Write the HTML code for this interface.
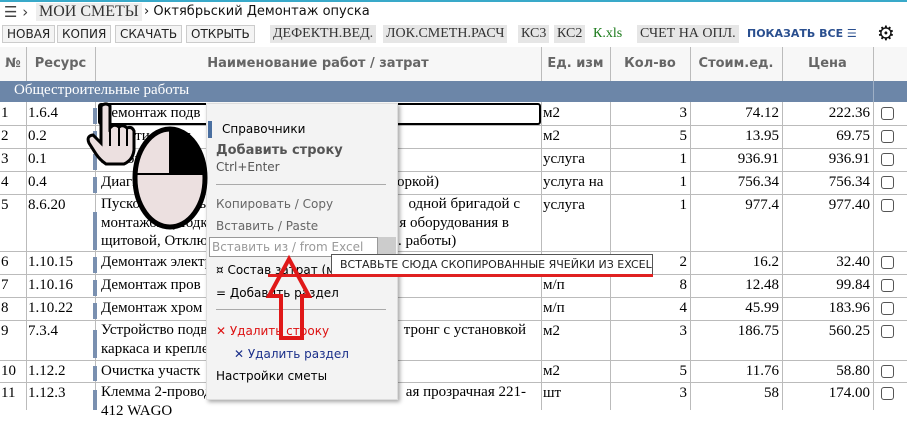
<!DOCTYPE html>
<html><head><meta charset="utf-8"><style>
*{margin:0;padding:0;box-sizing:border-box}
body{width:907px;height:410px;overflow:hidden;background:#fff;position:relative;font-family:"Liberation Serif",serif;font-size:15px;color:#000}
.a{position:absolute;white-space:nowrap}
.sans{font-family:"DejaVu Sans","Liberation Sans",sans-serif}
.btn{position:absolute;top:25px;height:18px;border:1px solid #ccc;background:#f4f4f4;font-family:"DejaVu Sans",sans-serif;font-size:12px;line-height:16px;padding:0 4px;color:#222}
.sb{position:absolute;top:25px;height:18px;background:#e6e6e6;font-size:14px;line-height:18px;padding:0 3px;color:#333}
.hl{position:absolute;left:0;width:907px;height:1px;background:#bbb}
.vl{position:absolute;width:1px;background:#bbb}
.th{position:absolute;top:47px;height:34px;line-height:34px;font-family:"DejaVu Sans",sans-serif;font-weight:bold;font-size:13px;color:#666;text-align:center}
.c{position:absolute;line-height:20px;white-space:nowrap}
.r{text-align:right}
.rt{position:absolute;line-height:20px;white-space:nowrap;text-align:right}
.cb{position:absolute;left:881px;width:13px;height:13px;border:1px solid #555;border-radius:3px;background:#fff}
.bar{position:absolute;left:93px;width:4px;background:#7a90b0}
.mi{position:absolute;left:216px;font-family:"DejaVu Sans",sans-serif;font-size:12px;white-space:nowrap}
</style></head><body>
<div class="a" style="left:0;top:0;width:907px;height:2px;background:#39a9c9"></div>
<div class="a sans" style="left:4px;top:3px;font-size:15px;color:#444">☰ ›</div>
<div class="a" style="left:36px;top:3px;font-size:16px;background:#eee;padding:0 3px;color:#333">МОИ СМЕТЫ</div>
<div class="a sans" style="left:144px;top:4px;font-size:13px;color:#111">› Октябрьский Демонтаж опуска</div>
<div class="btn" style="left:2px">НОВАЯ</div>
<div class="btn" style="left:57px">КОПИЯ</div>
<div class="btn" style="left:115px">СКАЧАТЬ</div>
<div class="btn" style="left:186px">ОТКРЫТЬ</div>
<div class="sb" style="left:270px">ДЕФЕКТН.ВЕД.</div>
<div class="sb" style="left:383px">ЛОК.СМЕТН.РАСЧ</div>
<div class="sb" style="left:518px">КС3</div>
<div class="sb" style="left:554px">КС2</div>
<div class="a" style="left:593px;top:25px;line-height:18px;font-size:14px;color:#1a7a1a">К.xls</div>
<div class="sb" style="left:637px">СЧЕТ НА ОПЛ.</div>
<div class="a sans" style="left:747px;top:27px;font-size:11px;font-weight:bold;color:#2a4f8f">ПОКАЗАТЬ ВСЕ ☰</div>
<div class="a sans" style="left:877px;top:21px;font-size:20px;color:#111">⚙</div>
<div class="a" style="left:0;top:47px;width:907px;height:34px;background:#f7f7f7"></div>
<div class="th" style="left:0;width:26px">№</div>
<div class="th" style="left:26px;width:69px">Ресурс</div>
<div class="th" style="left:95px;width:446px">Наименование работ / затрат</div>
<div class="th" style="left:541px;width:69px">Ед. изм</div>
<div class="th" style="left:610px;width:80px">Кол-во</div>
<div class="th" style="left:690px;width:92px">Стоим.ед.</div>
<div class="th" style="left:782px;width:91px">Цена</div>
<div class="a" style="left:0;top:81px;width:907px;height:21px;background:#6c86a8"></div>
<div class="a" style="left:873px;top:81px;width:1px;height:21px;background:#9fb0c6"></div>
<div class="a" style="left:14px;top:82px;color:#fff;font-size:15px">Общестроительные работы</div>

<div class="vl" style="left:26px;top:47px;height:34px"></div><div class="vl" style="left:95px;top:47px;height:34px"></div><div class="vl" style="left:541px;top:47px;height:34px"></div><div class="vl" style="left:610px;top:47px;height:34px"></div><div class="vl" style="left:690px;top:47px;height:34px"></div><div class="vl" style="left:782px;top:47px;height:34px"></div><div class="vl" style="left:873px;top:47px;height:34px"></div>
<div class="vl" style="left:26px;top:102px;height:308px"></div><div class="vl" style="left:95px;top:102px;height:308px"></div><div class="vl" style="left:541px;top:102px;height:308px"></div><div class="vl" style="left:610px;top:102px;height:308px"></div><div class="vl" style="left:690px;top:102px;height:308px"></div><div class="vl" style="left:782px;top:102px;height:308px"></div><div class="vl" style="left:873px;top:102px;height:308px"></div>
<div class="hl" style="top:125px"></div><div class="hl" style="top:148px"></div><div class="hl" style="top:171px"></div><div class="hl" style="top:194px"></div><div class="hl" style="top:251px"></div><div class="hl" style="top:274px"></div><div class="hl" style="top:297px"></div><div class="hl" style="top:320px"></div><div class="hl" style="top:360px"></div><div class="hl" style="top:382px"></div>

<div class="bar" style="top:108px;height:16px"></div><div class="bar" style="top:131px;height:16px"></div><div class="bar" style="top:154px;height:16px"></div><div class="bar" style="top:177px;height:16px"></div><div class="bar" style="top:212px;height:38px"></div><div class="bar" style="top:257px;height:16px"></div><div class="bar" style="top:280px;height:16px"></div><div class="bar" style="top:303px;height:16px"></div><div class="bar" style="top:330px;height:28px"></div><div class="bar" style="top:366px;height:15px"></div><div class="bar" style="top:390px;height:20px"></div>

<div class="a" style="left:98px;top:103px;width:443px;height:22px;border:2px solid #000;border-radius:3px"></div>

<div class="c" style="left:1px;top:103px">1</div><div class="c" style="left:28px;top:103px">1.6.4</div><div class="c" style="left:101px;top:103px">Демонтаж подв</div><div class="c" style="left:543px;top:103px">м2</div><div class="c r" style="left:610px;width:77px;top:103px">3</div><div class="c r" style="left:690px;width:89px;top:103px">74.12</div><div class="c r" style="left:782px;width:88px;top:103px">222.36</div><div class="cb" style="top:107px"></div>
<div class="c" style="left:1px;top:126px">2</div><div class="c" style="left:28px;top:126px">0.2</div><div class="c" style="left:101px;top:126px">Укрытие ценн</div><div class="c" style="left:543px;top:126px">м2</div><div class="c r" style="left:610px;width:77px;top:126px">5</div><div class="c r" style="left:690px;width:89px;top:126px">13.95</div><div class="c r" style="left:782px;width:88px;top:126px">69.75</div><div class="cb" style="top:130px"></div>
<div class="c" style="left:1px;top:149px">3</div><div class="c" style="left:28px;top:149px">0.1</div><div class="c" style="left:101px;top:149px">Вызов</div><div class="c" style="left:543px;top:149px">услуга</div><div class="c r" style="left:610px;width:77px;top:149px">1</div><div class="c r" style="left:690px;width:89px;top:149px">936.91</div><div class="c r" style="left:782px;width:88px;top:149px">936.91</div><div class="cb" style="top:153px"></div>
<div class="c" style="left:1px;top:172px">4</div><div class="c" style="left:28px;top:172px">0.4</div><div class="c" style="left:101px;top:172px">Диагностика</div><div class="c" style="left:397px;top:172px">оркой)</div><div class="c" style="left:543px;top:172px">услуга на</div><div class="c r" style="left:610px;width:77px;top:172px">1</div><div class="c r" style="left:690px;width:89px;top:172px">756.34</div><div class="c r" style="left:782px;width:88px;top:172px">756.34</div><div class="cb" style="top:176px"></div>
<div class="c" style="left:1px;top:195px">5</div><div class="c" style="left:28px;top:195px">8.6.20</div><div class="c" style="left:101px;top:195px;line-height:18.5px">Пусконаладочные<br>монтажом (Подкл<br>щитовой, Отключ</div>
<div class="rt" style="left:398px;width:122px;top:195px;line-height:18.5px">одной бригадой с</div>
<div class="rt" style="left:398px;width:111px;top:213.5px;line-height:18.5px">я оборудования в</div>
<div class="rt" style="left:398px;width:57px;top:232px;line-height:18.5px">. работы)</div>
<div class="c" style="left:543px;top:195px">услуга</div><div class="c r" style="left:610px;width:77px;top:195px">1</div><div class="c r" style="left:690px;width:89px;top:195px">977.4</div><div class="c r" style="left:782px;width:88px;top:195px">977.40</div><div class="cb" style="top:199px"></div>
<div class="c" style="left:1px;top:252px">6</div><div class="c" style="left:28px;top:252px">1.10.15</div><div class="c" style="left:101px;top:252px">Демонтаж электр</div><div class="c r" style="left:610px;width:77px;top:252px">2</div><div class="c r" style="left:690px;width:89px;top:252px">16.2</div><div class="c r" style="left:782px;width:88px;top:252px">32.40</div><div class="cb" style="top:256px"></div>
<div class="c" style="left:1px;top:275px">7</div><div class="c" style="left:28px;top:275px">1.10.16</div><div class="c" style="left:101px;top:275px">Демонтаж пров</div><div class="c" style="left:543px;top:275px">м/п</div><div class="c r" style="left:610px;width:77px;top:275px">8</div><div class="c r" style="left:690px;width:89px;top:275px">12.48</div><div class="c r" style="left:782px;width:88px;top:275px">99.84</div><div class="cb" style="top:279px"></div>
<div class="c" style="left:1px;top:298px">8</div><div class="c" style="left:28px;top:298px">1.10.22</div><div class="c" style="left:101px;top:298px">Демонтаж хром</div><div class="c" style="left:543px;top:298px">м/п</div><div class="c r" style="left:610px;width:77px;top:298px">4</div><div class="c r" style="left:690px;width:89px;top:298px">45.99</div><div class="c r" style="left:782px;width:88px;top:298px">183.96</div><div class="cb" style="top:302px"></div>
<div class="c" style="left:1px;top:321px">9</div><div class="c" style="left:28px;top:321px">7.3.4</div><div class="c" style="left:101px;top:321px;line-height:19px">Устройство подвес<br>каркаса и креплен</div><div class="rt" style="left:398px;width:128px;top:321px;line-height:19px">тронг с установкой</div><div class="c" style="left:543px;top:321px">м2</div><div class="c r" style="left:610px;width:77px;top:321px">3</div><div class="c r" style="left:690px;width:89px;top:321px">186.75</div><div class="c r" style="left:782px;width:88px;top:321px">560.25</div><div class="cb" style="top:325px"></div>
<div class="c" style="left:1px;top:361px">10</div><div class="c" style="left:28px;top:361px">1.12.2</div><div class="c" style="left:101px;top:361px">Очистка участк</div><div class="c" style="left:543px;top:361px">м2</div><div class="c r" style="left:610px;width:77px;top:361px">5</div><div class="c r" style="left:690px;width:89px;top:361px">11.76</div><div class="c r" style="left:782px;width:88px;top:361px">58.80</div><div class="cb" style="top:365px"></div>
<div class="c" style="left:1px;top:383px">11</div><div class="c" style="left:28px;top:383px">1.12.3</div><div class="c" style="left:101px;top:383px;line-height:19px">Клемма 2-провод<br>412 WAGO</div><div class="rt" style="left:398px;width:128px;top:383px;line-height:19px">ая прозрачная 221-</div><div class="c" style="left:543px;top:383px">шт</div><div class="c r" style="left:610px;width:77px;top:383px">3</div><div class="c r" style="left:690px;width:89px;top:383px">58</div><div class="c r" style="left:782px;width:88px;top:383px">174.00</div><div class="cb" style="top:387px"></div>

<div class="a" style="left:206px;top:103px;width:192px;height:297px;background:#f3f3f3;box-shadow:2px 2px 4px rgba(0,0,0,.35);border:1px solid #ddd"></div>
<div class="a" style="left:208px;top:121px;width:4px;height:17px;background:#4a6fa0"></div>
<div class="mi" style="top:122px;left:222px">Справочники</div>
<div class="mi" style="top:143px;font-weight:bold;font-size:13px;color:#555">Добавить строку</div>
<div class="mi" style="top:160px;color:#555">Ctrl+Enter</div>
<div class="a" style="left:216px;top:184px;width:170px;height:1px;background:#aaa"></div>
<div class="mi" style="top:197px;color:#666">Копировать / Copy</div>
<div class="mi" style="top:219px;color:#666">Вставить / Paste</div>
<div class="a" style="left:378px;top:237px;width:18px;height:19px;background:#ccc"></div>
<div class="a" style="left:209px;top:237px;width:169px;height:20px;background:#fff;border:1px solid #999"></div>
<div class="mi" style="left:212px;top:240px;color:#999">Вставить из / from Excel</div>
<div class="mi" style="top:263px">¤ Состав затрат (м</div>
<div class="mi" style="top:286px">= Добавить раздел</div>
<div class="a" style="left:216px;top:309px;width:170px;height:1px;background:#aaa"></div>
<div class="mi" style="top:324px;color:#d11">✕ Удалить строку</div>
<div class="mi" style="left:234px;top:347px;color:#1a2f8a">✕ Удалить раздел</div>
<div class="mi" style="top:369px">Настройки сметы</div>

<div class="a sans" style="left:331px;top:254px;width:322px;height:21px;background:#fff;border:1px solid #555;font-size:11px;line-height:19px;padding-left:8px;color:#222">ВСТАВЬТЕ СЮДА СКОПИРОВАННЫЕ ЯЧЕЙКИ ИЗ EXCEL</div>
<div class="a" style="left:268px;top:274px;width:385px;height:3px;background:#e02020"></div>

<svg class="a" style="left:0;top:0" width="907" height="410">
<path d="M289 259 L309 296 L302 296 L302 338 L281 338 L281 296 L269 296 Z" fill="none" stroke="#e01818" stroke-width="4" stroke-linejoin="miter"/>
<path d="M101 106 Q106 102 110 106 L110 128 Q114 123 119 127 Q123 124 127 128 Q132 126 134 131 L134 150 Q133 160 124 164 L106 164 Q100 160 96 154 L89 143 Q86 136 93 135 L101 143 Z" fill="#ece0e0" stroke="#000" stroke-width="3"/>
<path d="M110 128 L110 146 M119 127 L119 146 M127 128 L127 146" stroke="#000" stroke-width="2"/>
<ellipse cx="170" cy="178" rx="35" ry="49" fill="#ece0e0" stroke="#000" stroke-width="5"/>
<path d="M170 131 A35 49 0 0 1 204 174 L170 174 Z" fill="#000"/>
<path d="M136 174 L205 174 M170 131 L170 174" stroke="#000" stroke-width="2"/>
</svg>
</body></html>
